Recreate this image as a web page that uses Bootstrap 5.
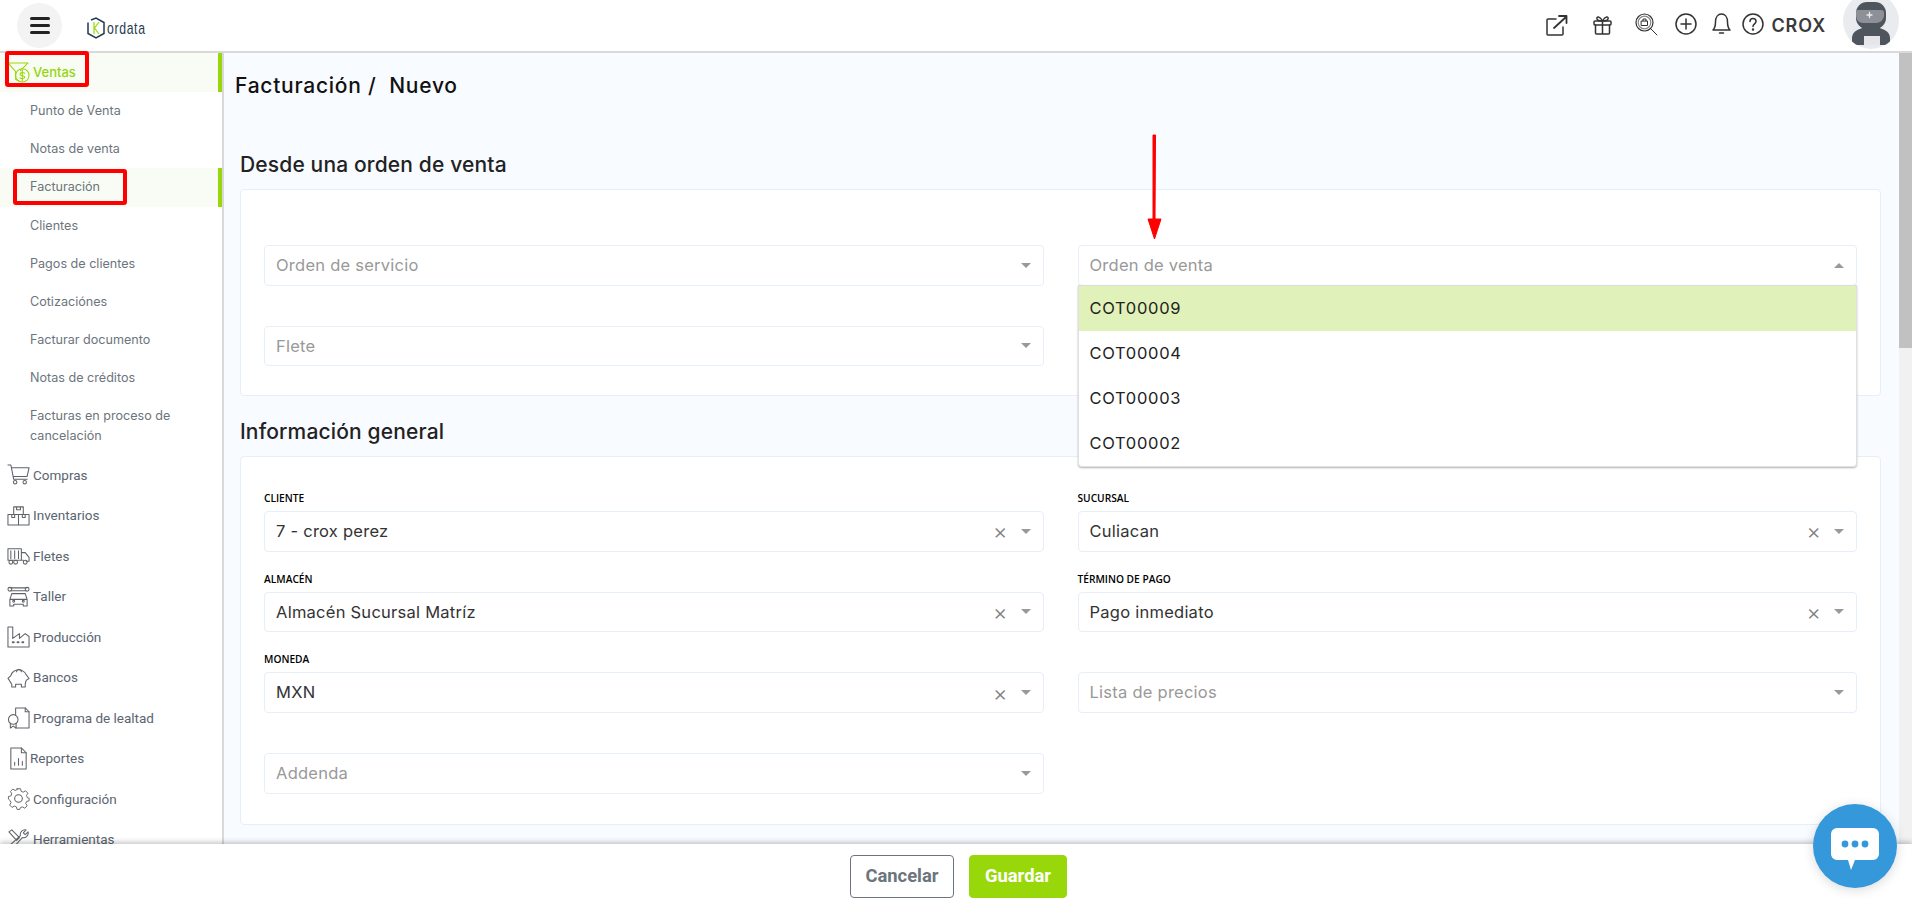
<!DOCTYPE html>
<html lang="es">
<head>
<meta charset="utf-8">
<title>Facturación</title>
<link href="https://cdn.jsdelivr.net/npm/bootstrap@5.3.0/dist/css/bootstrap.min.css" rel="stylesheet">
<style>
html,body{height:100%;overflow:hidden}
body{font-family:"Inter","Liberation Sans",sans-serif;color:#222;background:#fff}
.app-shell{height:905px;position:relative;overflow:hidden}
.top-bar{height:53px;border-bottom:2px solid #d9d9d9;padding-left:17px;padding-right:13px;background:#fff}
.burger{width:45px;height:45px;border-radius:50%;background:#f3f3f3;margin-top:3px}
.burger span{display:block;width:20px;height:3px;background:#222;border-radius:2px;margin:2px 0}
.brand{margin-left:24px;gap:1px;margin-top:3px}
.brand-text{font-family:"Liberation Sans",sans-serif;font-size:17px;letter-spacing:.9px;color:#1f3b4d;line-height:1;display:inline-block;transform:scaleX(.72);transform-origin:left center}
.top-icons{height:52px}
.top-icons svg{display:block;flex:none;fill:none;stroke:#333;stroke-width:1.5;stroke-linecap:round;stroke-linejoin:round}
.crox{font-size:18px;font-weight:600;letter-spacing:.9px;color:#3a3a3a;margin-left:7px;margin-right:17px;margin-top:17px;line-height:1}
.avatar{width:56px;height:56px;border-radius:50%;background:#e9ebee;margin-top:-7px;flex:none}
.work-area{height:791px}
.side-nav{width:224px;flex:none;border-right:2px solid #d9d9d9;background:#fff;overflow:hidden}
.nav-main{display:flex;align-items:center;gap:3px;height:40.5px;padding-left:7px;font-family:Roboto,"Liberation Sans",sans-serif;font-size:13.5px;color:#5b6470;text-decoration:none}
.nav-main svg{width:23px;height:23px;flex:none;fill:none;stroke:#5f6368;stroke-width:1.1;stroke-linejoin:round;stroke-linecap:round}
.nav-main.on{height:39px;background:#f9fcf4;border-right:4px solid #98d80a;color:#94d60c;font-family:"Inter",sans-serif;font-weight:500;font-size:13px}
.nav-main.on svg{stroke:#98d80a}
.nav-sub{display:flex;align-items:center;height:38.2px;padding-left:30px;font-size:12.6px;color:#6c757d;text-decoration:none;line-height:20px}
.nav-sub.on{background:#f9fcf4;border-right:4px solid #98d80a}
.nav-sub.two{height:57px;padding-right:30px}
.main-pane{background:#f8fbff;padding:0 18px 0 16px;overflow:hidden;min-width:0}
.page-title{font-size:21px;font-weight:500;letter-spacing:.75px;color:#111;line-height:24px;margin:21px 0 0 -5px;white-space:pre}
.sec-title{font-size:21px;font-weight:500;letter-spacing:.15px;color:#222;line-height:24px;margin:0 0 12px 0}
.sec-one{margin-top:55px}
.pane-card{background:#fff;border:1px solid #e6eff8;border-radius:4px;padding:0 23px}
.card-one{height:207px;padding-top:55px;margin-bottom:24px}
.card-two{height:369px;padding-top:35px}
.form-cols{display:grid;grid-template-columns:1fr 1fr;column-gap:34px}
.card-one .form-cols{row-gap:40px}
.card-two .form-cols{row-gap:21px}
.fake-select{height:40.67px;border:1px solid #e6eff8;border-radius:4px;background:#fff;padding:0 12px 0 11px;font-size:16.5px;letter-spacing:.25px;color:#333;position:relative}
.fake-select.ph{color:#999}
.fake-select .xmark{color:#808080;font-size:22px;font-weight:300;margin-right:13px;line-height:1}
.caret-d{width:0;height:0;border-left:5px solid transparent;border-right:5px solid transparent;border-top:5px solid #999}
.caret-u{width:0;height:0;border-left:5px solid transparent;border-right:5px solid transparent;border-bottom:5px solid #999}
.mini-label{font-family:"Open Sans",sans-serif;font-size:10.2px;font-weight:600;color:#000;height:19px;line-height:13px;text-transform:uppercase}
.drop-list{position:absolute;left:-1px;right:-1px;top:39px;background:#fff;border:1px solid #e0e0e0;border-top:1px solid #ddd;border-radius:0 0 4px 4px;box-shadow:0 1px 2px rgba(0,0,0,.3);z-index:5;letter-spacing:.7px}
.drop-list div{height:45px;line-height:45px;padding-left:11px;color:#222}
.drop-list .hot{background:#e0f1b9}
.side-scroll{width:13px;flex:none;background:#f1f1f1}
.side-thumb{height:295px;background:#c1c1c1}
.foot-bar{height:61px;background:#fff;box-shadow:0 -2px 5px rgba(0,0,0,.22);position:relative;z-index:6;gap:15px;padding:3px 0 0 5px}
.btn-cancel,.btn-save{height:43px;font-size:18.4px;font-weight:700;padding:0;border-radius:4px;font-family:Roboto,sans-serif}
.btn-cancel{width:104px;background:#fff;border:1px solid #6c757d;color:#6c757d}
.btn-save{width:98px;background:#98d80a;border:1px solid #98d80a;color:#fff}
.chat-fab{position:absolute;left:1813px;top:804px;width:84px;height:84px;border-radius:50%;background:#3498db;z-index:8;box-shadow:0 2px 12px rgba(0,0,0,.15)}
.mark-box{position:absolute;border:4px solid #f00;border-radius:3px;z-index:9;pointer-events:none}
.mark-a{left:5px;top:51px;width:84px;height:36px}
.mark-b{left:13px;top:169px;width:114px;height:36px}
.mark-arrow{position:absolute;left:1145px;top:133px;z-index:9}
</style>
</head>
<body>
<div class="app-shell d-flex flex-column">
  <header class="top-bar d-flex justify-content-between flex-none">
    <div class="d-flex align-items-start">
      <div class="burger d-flex flex-column align-items-center justify-content-center"><span></span><span></span><span></span></div>
      <div class="brand d-flex align-items-center" style="height:50px">
        <svg width="20" height="22" viewBox="0 0 20 22"><path d="M5 3 10 1l8 4.500v11L10 21 2 16.500V5.500" fill="none" stroke="#1f3b4d" stroke-width="1.5"/><path d="M8 5v12M13 5 8.500 11l4.500 6" fill="none" stroke="#98d80a" stroke-width="1.200"/></svg>
        <span class="brand-text">ordata</span>
      </div>
    </div>
    <div class="top-icons d-flex align-items-start">
      <svg style="margin-top:14px;margin-right:25px" width="23" height="23" viewBox="0 0 23 23"><path d="M11 5H3a1 1 0 0 0-1 1v14a1 1 0 0 0 1 1h14a1 1 0 0 0 1-1v-7"/><path d="M9 14 21 3M14 2h7.500v7" stroke-width="1.8"/></svg>
      <svg style="margin-top:15px;margin-right:23px" width="19" height="20" viewBox="0 0 19 20"><rect x="1" y="6" width="17" height="4" rx="1"/><path d="M2.500 10v8a1 1 0 0 0 1 1h12a1 1 0 0 0 1-1v-8M9.500 6v13M9.500 6C7 1 3 1 4 4c.4 1.300 3 2 5.500 2 2.500 0 5.100-.7 5.500-2 1-3-3-3-5.500 2"/></svg>
      <svg style="margin-top:13px;margin-right:17px;stroke-width:1.2" width="23" height="23" viewBox="0 0 23 23"><circle cx="9.500" cy="9.500" r="8.500"/><circle cx="9.500" cy="9.500" r="6.300" stroke="#888"/><path d="m16 16 6 6M6.500 8h6v4.500h-6zM8 8V6h3v2" stroke-width="1"/></svg>
      <svg style="margin-top:13px;margin-right:14px" width="22" height="22" viewBox="0 0 22 22"><circle cx="11" cy="11" r="10"/><path d="M11 6v10M6 11h10"/></svg>
      <svg style="margin-top:12px;margin-right:10px" width="21" height="23" viewBox="0 0 21 23"><path d="M2 18c2-2 2.500-4 2.500-8C4.500 5 7 2 10.500 2s6 3 6 8c0 4 .5 6 2.500 8z"/><path d="M8.500 21h4"/></svg>
      <svg style="margin-top:13px" width="22" height="22" viewBox="0 0 22 22"><circle cx="11" cy="11" r="10"/><path d="M8 8.500C8 6.500 9.500 5.500 11 5.500s3 1 3 3c0 2.300-3 2.500-3 5"/><circle cx="11" cy="16.500" r=".5"/></svg>
      <span class="crox">CROX</span>
      <div class="avatar overflow-hidden">
        <svg width="56" height="56" viewBox="0 0 56 56" style="stroke:none"><path d="M9 52V45c0-7 8-11 19-11s19 4 19 11v7z" fill="#4f555d"/><rect x="13" y="9" width="30" height="27" rx="11" fill="#4f555d"/><path d="M14 17h24a3 3 0 0 1 3 3v2c0 5-4 8-8 8H20c-4 0-7-3-7-8v-2a3 3 0 0 1 1-3z" fill="#8d9197"/><path d="M21 43h16v9H21z" fill="#e4e6e9"/><path d="M24 22h5M26.500 19.500v5" stroke="#e9ebee" stroke-width="1.300" fill="none"/></svg>
      </div>
    </div>
  </header>

  <div class="work-area d-flex">
    <nav class="side-nav">
      <a class="nav-main on" href="#"><svg viewBox="0 0 24 24"><path d="M1 2h21l-8 8M1 2l8 9v8l3 2"/><circle cx="16" cy="15" r="7"/><path d="M18.500 13c-1-1.300-5-1.300-5 .7s5 1.300 5 3.200-3.800 1.800-5 .6M16 9.500v11"/></svg>Ventas</a>
      <a class="nav-sub" href="#">Punto de Venta</a>
      <a class="nav-sub" href="#">Notas de venta</a>
      <a class="nav-sub on" href="#">Facturación</a>
      <a class="nav-sub" href="#">Clientes</a>
      <a class="nav-sub" href="#">Pagos de clientes</a>
      <a class="nav-sub" href="#">Cotizaciónes</a>
      <a class="nav-sub" href="#">Facturar documento</a>
      <a class="nav-sub" href="#">Notas de créditos</a>
      <a class="nav-sub two" href="#">Facturas en proceso de cancelación</a>
      <a class="nav-main" href="#"><svg viewBox="0 0 24 24"><path d="M1 2h3l3 15h14M5 5h18l-2 9H7"/><circle cx="8.500" cy="20" r="1.800"/><circle cx="18.500" cy="20" r="1.800"/></svg>Compras</a>
      <a class="nav-main" href="#"><svg viewBox="0 0 24 24"><path d="M7 3h10v8H7zM1 11h11v11H1zM12 11h11v11H12zM10 3v3h4V3M5 11v3h3v-3M16 11v3h3v-3"/></svg>Inventarios</a>
      <a class="nav-main" href="#"><svg viewBox="0 0 24 24"><path d="M1 5h14v12H1zM4 7v8M8 7v8M12 7v8M15 9h4l4 5v4h-3M15 17h2"/><circle cx="4" cy="19" r="2"/><circle cx="9" cy="19" r="2"/><circle cx="19" cy="19" r="2"/></svg>Fletes</a>
      <a class="nav-main" href="#"><svg viewBox="0 0 24 24"><path d="M4 3h16M4 6h16"/><circle cx="3" cy="4.500" r="2"/><circle cx="21" cy="4.500" r="2"/><path d="M5 9h14l2 6v7h-4v-2H7v2H3v-7zM3 15h18"/><circle cx="7" cy="17" r="1"/><circle cx="17" cy="17" r="1"/></svg>Taller</a>
      <a class="nav-main" href="#"><svg viewBox="0 0 24 24"><path d="M1 2h5v12l7-5v5l6-5 4 3v11H1z"/><path d="M6 18h1M11 18h1M16 18h1" stroke-width="2"/></svg>Producción</a>
      <a class="nav-main" href="#"><svg viewBox="0 0 24 24"><path d="M1 13l3-3c1-4 5-6 8-6s7 2 8 5l3 4-3 2-1 4v3h-4v-3H9v3H5v-3c-2-2-2-4-4-6z"/><path d="M10 6c0-3 5-3 5 0"/></svg>Bancos</a>
      <a class="nav-main" href="#"><svg viewBox="0 0 24 24"><path d="M9 9V2h10l4 4v17H9"/><path d="M19 2v4h4"/><circle cx="6.500" cy="14" r="5"/><path d="M3.500 18v5l3-2 3 2v-5"/></svg>Programa de lealtad</a>
      <a class="nav-main" href="#" style="gap:0"><svg viewBox="0 0 24 24"><path d="M4 1h11l5 5v17H4z"/><path d="M15 1v5h5M8 19v-3M12 19v-7M16 19v-4"/></svg>Reportes</a>
      <a class="nav-main" href="#"><svg viewBox="0 0 24 24"><circle cx="12" cy="12" r="4"/><path d="M10 2h4l.7 3 2.400 1 2.700-1.600 2.800 2.800L20.900 9.900l1 2.400 2.100.7v3l-2.900.7-1 2.400 1.600 2.700-2.800 2.800-2.700-1.600-2.400 1-.7 2H10l-.7-2.900-2.400-1-2.700 1.600-2.800-2.800 1.600-2.700-1-2.400L0 14v-3l2.900-.7 1-2.400L2.300 5.200 5.100 2.400l2.700 1.600 2.400-1z" transform="translate(1.500 0) scale(.9)"/></svg>Configuración</a>
      <a class="nav-main" href="#"><svg viewBox="0 0 24 24"><path d="M2 4l3-2 8 8-3 3zM14 8a5 5 0 0 1 6-6l-3 3 2 2 3-3a5 5 0 0 1-6 6L6 21l-3-3z"/></svg>Herramientas</a>
    </nav>

    <main class="main-pane flex-grow-1">
      <div class="page-title">Facturación /  Nuevo</div>
      <h2 class="sec-title sec-one">Desde una orden de venta</h2>
      <section class="pane-card card-one">
        <div class="form-cols">
          <div class="fake-select ph d-flex align-items-center justify-content-between"><span>Orden de servicio</span><i class="caret-d"></i></div>
          <div class="fake-select ph d-flex align-items-center justify-content-between"><span>Orden de venta</span><i class="caret-u"></i>
            <div class="drop-list"><div class="hot">COT00009</div><div>COT00004</div><div>COT00003</div><div>COT00002</div></div>
          </div>
          <div class="fake-select ph d-flex align-items-center justify-content-between"><span>Flete</span><i class="caret-d"></i></div>
        </div>
      </section>
      <h2 class="sec-title">Información general</h2>
      <section class="pane-card card-two">
        <div class="form-cols">
          <div><div class="mini-label">Cliente</div><div class="fake-select d-flex align-items-center"><span class="flex-grow-1">7 - crox perez</span><span class="xmark">×</span><i class="caret-d"></i></div></div>
          <div><div class="mini-label">Sucursal</div><div class="fake-select d-flex align-items-center"><span class="flex-grow-1">Culiacan</span><span class="xmark">×</span><i class="caret-d"></i></div></div>
          <div><div class="mini-label">Almacén</div><div class="fake-select d-flex align-items-center"><span class="flex-grow-1">Almacén Sucursal Matríz</span><span class="xmark">×</span><i class="caret-d"></i></div></div>
          <div><div class="mini-label">Término de pago</div><div class="fake-select d-flex align-items-center"><span class="flex-grow-1">Pago inmediato</span><span class="xmark">×</span><i class="caret-d"></i></div></div>
          <div><div class="mini-label">Moneda</div><div class="fake-select d-flex align-items-center"><span class="flex-grow-1">MXN</span><span class="xmark">×</span><i class="caret-d"></i></div></div>
          <div><div class="mini-label"></div><div class="fake-select ph d-flex align-items-center"><span class="flex-grow-1">Lista de precios</span><i class="caret-d"></i></div></div>
          <div><div class="mini-label"></div><div class="fake-select ph d-flex align-items-center"><span class="flex-grow-1">Addenda</span><i class="caret-d"></i></div></div>
        </div>
      </section>
    </main>
    <div class="side-scroll"><div class="side-thumb"></div></div>
  </div>

  <footer class="foot-bar d-flex align-items-center justify-content-center">
    <button class="btn btn-cancel" type="button">Cancelar</button>
    <button class="btn btn-save" type="button">Guardar</button>
  </footer>

  <div class="chat-fab d-flex align-items-center justify-content-center">
    <svg width="52" height="52" viewBox="0 0 52 52"><path d="M8 8h36a6 6 0 0 1 6 6v20a6 6 0 0 1-6 6H26l-4 10-3-10H8a6 6 0 0 1-6-6V14a6 6 0 0 1 6-6z" fill="#fff"/><circle cx="16" cy="24" r="3.400" fill="#3498db"/><circle cx="26" cy="24" r="3.400" fill="#3498db"/><circle cx="36" cy="24" r="3.400" fill="#3498db"/></svg>
  </div>
  <div class="mark-box mark-a"></div>
  <div class="mark-box mark-b"></div>
  <svg class="mark-arrow" width="18" height="108" viewBox="0 0 18 108"><path d="M8 2h2.500l-.5 84h6l-6.500 20L3 86h5z" fill="#f00" stroke="#f00" stroke-linejoin="round"/></svg>
</div>
<script src="https://cdn.jsdelivr.net/npm/bootstrap@5.3.0/dist/js/bootstrap.bundle.min.js"></script>
</body>
</html>
